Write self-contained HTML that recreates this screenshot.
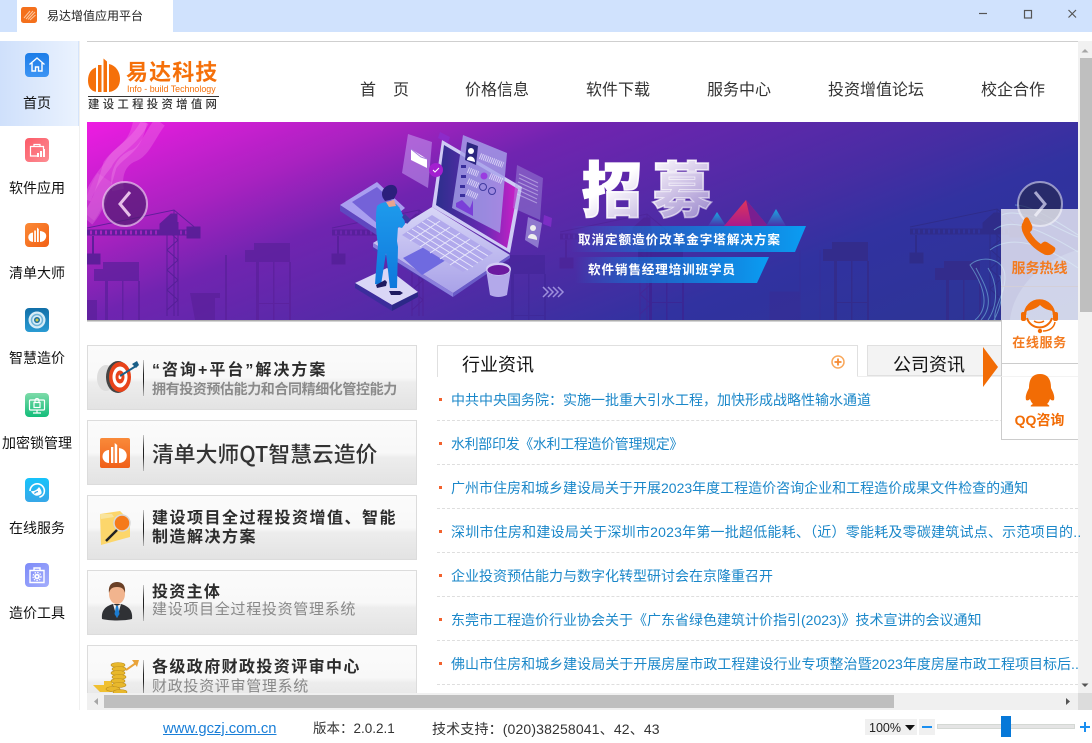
<!DOCTYPE html>
<html lang="zh"><head><meta charset="utf-8"><title>易达增值应用平台</title>
<style>
*{box-sizing:border-box;margin:0;padding:0}
html,body{width:1092px;height:743px;overflow:hidden;background:#fff;font-family:"Liberation Sans","Noto Sans CJK SC",sans-serif;color:#111}
.a{position:absolute;white-space:nowrap}
#stage{position:relative;width:1092px;height:743px;overflow:hidden}
.side{left:0;width:74px;text-align:center;font-size:14px;line-height:20px;color:#111}
.nav{top:80px;font-size:16px;line-height:22px;color:#333}
.card{left:87px;width:330px;height:65px;border:1px solid #dcdcdc;background:linear-gradient(#fbfbfb 0,#f8f8f8 50%,#ededed 58%,#e3e3e3 100%)}
.dv{left:143px;width:1px;height:36px;background:linear-gradient(rgba(0,0,0,.2),#222 40%,#222 60%,rgba(0,0,0,.2))}
.t1{left:152px;font-size:16px;font-weight:bold;color:#2c2c2c;line-height:20px;letter-spacing:1.4px}
.t2{left:152px;font-size:14px;font-weight:bold;color:#8a8a8a;line-height:18px;letter-spacing:-.4px}
.t3{left:152px;font-size:15px;color:#888;line-height:18px;letter-spacing:.7px}
.news{left:451px;font-size:14px;line-height:20px;color:#1a87c9;z-index:2}
.bul{left:439px;width:3px;height:3px;background:#f2622e}
.dash{left:437px;width:641px;height:0;border-top:1px dashed #dedede}
svg{position:absolute;display:block;overflow:visible}
</style></head><body><div id="stage">

<div class="a" style="left:0;top:0;width:1092px;height:32px;background:#d0e2fd"></div>
<div class="a" style="left:17px;top:0;width:156px;height:32px;background:#fff"></div>
<svg style="left:21px;top:7px" width="16" height="16" viewBox="0 0 16 16"><rect width="16" height="16" rx="2.500" fill="#f4701c"/><path d="M5 12L12 4M7 12.500L14 5M9 13L14.500 8M3 11L9 4" stroke="#fbc7a0" stroke-width="1"/></svg>
<div class="a" style="left:47px;top:8px;font-size:12px;line-height:17px;color:#222">易达增值应用平台</div>
<svg style="left:960px;top:0" width="132" height="32" viewBox="0 0 132 32" fill="none" stroke="#555" stroke-width="1.200"><path d="M19 13.500H27"/><rect x="64.500" y="10.500" width="7" height="7.500"/><path d="M108.500 10L116 17.500M116 10L108.500 17.500"/></svg>

<div class="a" style="left:0;top:41px;width:79px;height:85px;background:linear-gradient(90deg,#cfe0fb,#eaf2fe);border-right:1px solid #d5e4fb"></div>
<div class="a" style="left:79px;top:41px;width:1px;height:669px;background:#f0f0f0"></div>

<svg class="a" style="left:25px;top:53px" width="24" height="24" viewBox="0 0 24 24"><defs><linearGradient id="gb" x1="0" y1="0" x2="0" y2="1"><stop offset="0" stop-color="#1c7de8"/><stop offset="1" stop-color="#3c94f4"/></linearGradient></defs><rect width="24" height="24" rx="4" fill="url(#gb)"/><path d="M4.500 11.500L12 5l7.500 6.500M7 10v8h3.500v-4h3v4H17v-8" fill="none" stroke="#fff" stroke-width="1.400"/></svg>
<div class="a side" style="top:93px">首页</div>
<svg class="a" style="left:25px;top:138px" width="24" height="24" viewBox="0 0 24 24"><defs><linearGradient id="gr" x1="0" y1="0" x2="1" y2="1"><stop offset="0" stop-color="#fb5b68"/><stop offset="1" stop-color="#fd8d93"/></linearGradient></defs><rect width="24" height="24" rx="4" fill="url(#gr)"/><path d="M13 18H5.500V8.500h13V11M9 8.500V6.500h6v2" fill="none" stroke="#fff" stroke-width="1.200"/><rect x="12" y="15" width="2" height="4" fill="#fff"/><rect x="15" y="13" width="2" height="6" fill="#fff"/><rect x="18" y="11" width="2" height="8" fill="#fff"/></svg>
<div class="a side" style="top:178px">软件应用</div>
<svg class="a" style="left:25px;top:223px" width="24" height="24" viewBox="0 0 24 24"><defs><linearGradient id="go" x1="0" y1="0" x2="1" y2="1"><stop offset="0" stop-color="#fb8a36"/><stop offset="1" stop-color="#f25f14"/></linearGradient></defs><rect width="24" height="24" rx="4" fill="url(#go)"/><g fill="#fff"><path d="M8 9.500v9.500a4.700 4.700 0 0 1 0-9.500z"/><rect x="9.200" y="7.500" width="1.700" height="11.500"/><path d="M12 4.500l1.800 1.500v13H12z"/><path d="M15 8c4.800 .5 7 3 6 6.500-.6 2.500-3 4.500-6 4.500z"/></g></svg>
<div class="a side" style="top:263px">清单大师</div>
<svg class="a" style="left:25px;top:308px" width="24" height="24" viewBox="0 0 24 24"><defs><linearGradient id="gt" x1="0" y1="0" x2="0" y2="1"><stop offset="0" stop-color="#116fa8"/><stop offset="1" stop-color="#2a9bd3"/></linearGradient></defs><rect width="24" height="24" rx="4" fill="url(#gt)"/><circle cx="12" cy="12" r="8.500" fill="#d6ecf7"/><circle cx="12" cy="12" r="5.500" fill="none" stroke="#6fb4d8" stroke-width="1.500"/><circle cx="12" cy="12" r="3" fill="#1a6f9f"/><circle cx="12" cy="12" r="1.500" fill="#c9c94b"/></svg>
<div class="a side" style="top:348px">智慧造价</div>
<svg class="a" style="left:25px;top:393px" width="24" height="24" viewBox="0 0 24 24"><defs><linearGradient id="gg" x1="0" y1="0" x2="0" y2="1"><stop offset="0" stop-color="#7edba9"/><stop offset="1" stop-color="#13bd7a"/></linearGradient></defs><rect width="24" height="24" rx="4" fill="url(#gg)"/><g fill="none" stroke="#fff" stroke-width="1.200"><rect x="4.500" y="7" width="15" height="10" rx="1"/><path d="M12 17v3M8 20h8"/><rect x="9" y="9.500" width="6" height="5"/><path d="M10 9.500V7.500a2 2 0 0 1 4 0v2"/></g></svg>
<div class="a side" style="top:433px;left:0;width:74px">加密锁管理</div>
<svg class="a" style="left:25px;top:478px" width="24" height="24" viewBox="0 0 24 24"><defs><linearGradient id="gc" x1="0" y1="0" x2="0" y2="1"><stop offset="0" stop-color="#16c3fb"/><stop offset="1" stop-color="#37a7e8"/></linearGradient></defs><rect width="24" height="24" rx="4" fill="url(#gc)"/><path d="M5 13a7.200 7.200 0 0 1 14.400 0c0 3-2 5.500-5 6.200" fill="none" stroke="#fff" stroke-width="1.600"/><path d="M6 13c3 .5 6-1 8-4 2 2.500 3 4.500 2.500 6.500-1.500 2-5 3-7 1.500C8 16 6.500 15 6 13z" fill="#fff"/><path d="M13 13.500c-1.500.3-3 1-3.500 2" stroke="#36a6e8" stroke-width="1.200" fill="none"/></svg>
<div class="a side" style="top:518px">在线服务</div>
<svg class="a" style="left:25px;top:563px" width="24" height="24" viewBox="0 0 24 24"><defs><linearGradient id="gp" x1="0" y1="0" x2="1" y2="1"><stop offset="0" stop-color="#7d8bf8"/><stop offset="1" stop-color="#a3adfc"/></linearGradient></defs><rect width="24" height="24" rx="4" fill="url(#gp)"/><path d="M5 7.500h14v12H5zM9 7.500V5h6v2.500" fill="none" stroke="#fff" stroke-width="1.400"/><circle cx="12" cy="13.500" r="2.800" fill="#fff"/><circle cx="12" cy="13.500" r="4" fill="none" stroke="#fff" stroke-width="1.200" stroke-dasharray="1.500 1.200"/><circle cx="12" cy="13.500" r="1" fill="#8e9afa"/></svg>
<div class="a side" style="top:603px">造价工具</div>

<div class="a" style="left:87px;top:41px;width:991px;height:1px;background:#cfcfcf"></div>

<!-- logo -->
<svg style="left:87px;top:56px" width="34" height="38" viewBox="0 0 34 38" fill="#f5700a"><path d="M9 11.500v24.300C3.800 35 1 30.800 1 24.500 1 17.800 4 13 9 11.500z"/><rect x="11" y="9" width="3.500" height="27"/><path d="M16.500 2.500l3.500 3V36h-3.500z"/><path d="M22 8c7 1.500 11 8 11 15 0 7-3.500 12-11 13z"/></svg>
<div class="a" style="left:126px;top:59px;font-size:22px;line-height:28px;font-weight:bold;color:#f5700a;letter-spacing:1.100px">易达科技</div>
<div class="a" style="left:127px;top:83px;font-size:8.900px;line-height:12px;color:#f5700a">Info - build Technology</div>
<div class="a" style="left:88px;top:96px;width:131px;height:1px;background:#333"></div>
<div class="a" style="left:88px;top:98px;font-size:11.400px;line-height:14px;color:#333;letter-spacing:3.300px;font-weight:500">建设工程投资增值网</div>

<div class="a nav" style="left:360px">首<span style="margin-left:17px">页</span></div>
<div class="a nav" style="left:465px">价格信息</div>
<div class="a nav" style="left:586px">软件下载</div>
<div class="a nav" style="left:707px">服务中心</div>
<div class="a nav" style="left:828px">投资增值论坛</div>
<div class="a nav" style="left:981px">校企合作</div>

<!-- banner -->
<svg style="left:87px;top:122px;overflow:hidden" width="991" height="198" viewBox="87 122 991 198">
<defs>
<linearGradient id="bg" gradientUnits="userSpaceOnUse" x1="87" y1="122" x2="282" y2="625"><stop offset="0" stop-color="#ee1ce2"/><stop offset=".21" stop-color="#a822c0"/><stop offset=".34" stop-color="#7024b0"/><stop offset=".6" stop-color="#472da3"/><stop offset=".72" stop-color="#3132a0"/><stop offset="1" stop-color="#2c3593"/></linearGradient>
<linearGradient id="tx" x1="0" y1="0" x2="1" y2="1"><stop offset=".35" stop-color="#fff"/><stop offset=".9" stop-color="#fff" stop-opacity=".45"/></linearGradient>
<linearGradient id="rb" x1="0" y1="0" x2="1" y2="0"><stop offset="0" stop-color="#0b9cf0" stop-opacity="0"/><stop offset=".4" stop-color="#1279d6" stop-opacity=".7"/><stop offset="1" stop-color="#0a9df2"/></linearGradient>
<linearGradient id="suit" x1="0" y1="0" x2="0" y2="1"><stop offset="0" stop-color="#1e9bec"/><stop offset="1" stop-color="#0f78dc"/></linearGradient>
<linearGradient id="scr" x1="0" y1="0" x2="1" y2="0"><stop offset="0" stop-color="#2c2e8c"/><stop offset=".6" stop-color="#6a2ab4"/><stop offset="1" stop-color="#cf1fc8"/></linearGradient>
<linearGradient id="deck" x1="0" y1="0" x2="0" y2="1"><stop offset="0" stop-color="#d8d6f7"/><stop offset="1" stop-color="#a9a2e8"/></linearGradient>
<linearGradient id="pyr" x1="0" y1="0" x2="0" y2="1"><stop offset="0" stop-color="#e0355a"/><stop offset="1" stop-color="#a81a8c"/></linearGradient>
<linearGradient id="pyb" x1="0" y1="0" x2="0" y2="1"><stop offset="0" stop-color="#1aa8e0"/><stop offset="1" stop-color="#4a30a8"/></linearGradient>
<g id="crane" fill="none" stroke="currentColor">
<path d="M0 22L87 4L111 24M87 4V110" stroke-width="1"/>
<path d="M0 26H113" stroke-width="5" stroke-dasharray="3 2"/>
<path d="M0 24H113M0 29H113" stroke-width="1"/>
<path d="M80 16V110M91 16V110" stroke-width="1"/>
<path d="M80 24L91 34L80 44L91 54L80 64L91 74L80 84L91 94L80 104" stroke-width="1"/>
<path d="M73 28V18L84 8H90V28z" fill="currentColor"/>
<rect x="100" y="21" width="13" height="11" fill="currentColor"/>
<rect x="0" y="48" width="13" height="10" fill="currentColor"/><path d="M6 30V48" stroke-width="2"/>
</g>
<g id="bld" fill="currentColor"><rect x="0" y="7" width="45" height="12"/><rect x="9" y="0" width="36" height="7"/><rect x="11" y="19" width="3" height="68"/><rect x="28" y="19" width="1.500" height="68"/><rect x="44" y="19" width="2" height="68"/><rect x="11" y="60" width="35" height="1"/></g>
</defs>
<rect x="87" y="122" width="991" height="198" fill="url(#bg)"/>
<!-- left wave -->
<g fill="none" stroke="#ffb7f2" stroke-opacity=".22">
<path d="M87 220C100 205 104 185 110 165 120 150 135 150 140 122" stroke-width="14"/>
<path d="M87 200C92 185 100 175 108 165 115 150 133 145 145 122" stroke-width="8"/>
<path d="M118 190C115 175 120 160 135 155 145 150 150 135 160 122" stroke-width="12"/>
<path d="M87 215C95 205 97 190 105 178" stroke-width="18" stroke-opacity=".12"/>
</g>
<!-- cranes -->
<g color="#4f1e92" opacity=".8">
<use href="#crane" x="87" y="206"/>
<use href="#crane" x="332" y="206" opacity=".8"/>
</g>
<g color="#4b2090" opacity=".5"><use href="#crane" x="560" y="210"/></g>
<g color="#2f2c88"><use href="#crane" x="910" y="205" opacity=".9"/></g>
<g color="#5a209a" opacity=".7"><use href="#bld" x="94" y="262"/><use href="#bld" x="245" y="243"/><path d="M190 293h30v5h-5v22h-20zM87 300h10v20H87zM225 255h2v65h-2z" fill="#5a209a"/></g>
<g color="#3d2290" opacity=".65"><use href="#bld" x="638" y="242"/><use href="#bld" x="500" y="255" opacity=".6"/></g>
<g color="#332c8c"><use href="#bld" x="823" y="242"/><use href="#bld" x="935" y="261"/><path d="M800 250v70M820 250v70M770 292h30v28h-30z" stroke="#3a2a90" fill="#3a2a90" opacity=".4"/></g>
<!-- right waves -->
<g fill="none" stroke="#7fc7e6" stroke-width="1" opacity=".55">
<path d="M1015 205c15 0 40 15 63 30M1002 215c10-5 30 0 50 10 12 6 20 10 26 12M994 230c15-12 40-5 84 22M990 250c20-15 50-8 88 18"/>
<path d="M975 320c18-15 5-40 -5-55 10-10 35-8 35 12 0 18-12 30-10 43M981 320c16-18 2-38 -5-52M988 320c12-18 8-40 0-52M994 320c8-15 10-30 6-45"/>
</g>
<path d="M1010 320c3-30 30-60 68-70v70z" fill="#8fb6e0" opacity=".3"/>
<!-- book -->
<path d="M340 205L377 182 405 208 378 230z" fill="#a99ef0"/><path d="M340 205L378 230 378 236 340 211z" fill="#5f47c0"/><path d="M352 202L377 187 400 208 378 224z" fill="#7462d8"/>
<!-- env card -->
<path d="M408 134L432 142 428 188 402 173z" fill="#c29cf0" opacity=".55"/><path d="M411 149L427 159V168L411 160z" fill="#fff"/><path d="M411 149L421 157 427 159" stroke="#a77ce0" fill="none"/>
<!-- laptop -->
<path d="M373 246L510 255 453 297 373 250z" fill="#4a3ab0" opacity=".6"/>
<path d="M432 207L510 255 453 293 373 243z" fill="url(#deck)"/>
<path d="M373 243L453 293V297L373 247z" fill="#8b7fdc"/><path d="M453 293L510 255V258L453 297z" fill="#6a5cc8"/>
<path d="M403 258L426 246 446 260 422 275z" fill="#6f6ae0"/>
<path d="M402 235L432 215 493 253 463 272z" fill="#b1a9ec"/>
<g stroke="#e7e6fb" stroke-width="1"><path d="M407 232L468 270M412 229L473 267M417 226L478 263M422 222L483 260M427 219L488 256"/><path d="M410 241L440 221M420 247L450 227M430 253L460 233M440 259L470 239M450 265L480 245"/></g>
<path d="M442 140L522 187 510 253 432 207z" fill="#cfcbf5"/>
<path d="M444 145L518 189 507 248 436 205z" fill="url(#scr)"/>
<!-- resume card -->
<path d="M463 135L507 153 500 233 452 208z" fill="#a6a1ea" opacity=".8"/>
<path d="M467 142L478 146 476 165 465 160z" fill="#2c2680"/><circle cx="471" cy="151" r="3" fill="#fff"/><path d="M467 160c0-5 8-5 8 2z" fill="#fff"/>
<g stroke="#e7e4fb" stroke-width="6" stroke-dasharray="1 1" opacity=".8"><path d="M480 156L503 165"/><path d="M468 170L478 174"/><path d="M468 181L479 186"/><path d="M467 192L478 197"/><path d="M490 176L502 181"/></g>
<g fill="#3a2f9c"><rect x="461" y="165" width="5" height="3"/><rect x="461" y="175" width="5" height="3"/><rect x="460" y="185" width="5" height="3"/><rect x="460" y="194" width="5" height="3"/></g>
<circle cx="484" cy="176" r="3.500" fill="#9a3ce0"/>
<circle cx="483" cy="187" r="3.500" fill="none" stroke="#403aa0"/><circle cx="492" cy="191" r="3.500" fill="none" stroke="#403aa0"/>
<path d="M456 203L462 200 470 208 473 200V216L456 207z" fill="#7a3fd8"/>
<circle cx="436" cy="170" r="7" fill="#a31fd0"/><path d="M433 170l2 2 4-4" stroke="#fff" fill="none"/>
<!-- docs -->
<path d="M517 165L543 178 540 220 513 208z" fill="#a69ee0" opacity=".4"/>
<g stroke="#ded9f8" opacity=".5"><path d="M519 174L538 183M519 178L538 187M518 182L538 191M518 186L538 195M518 190L537 199M517 194L537 203"/></g>
<path d="M528 217L542 223 538 248 525 240z" fill="#b3aee8" opacity=".6"/><circle cx="533" cy="228" r="3" fill="#eee"/><path d="M528 238c0-6 10-5 9 2z" fill="#eee"/>
<path d="M544 215l8 3-1 9-8-3zM440 132l10 5-2 6-10-5z" fill="#8a2fd0" opacity=".7"/>
<!-- cup -->
<path d="M486 269L511 269 507 295Q498 299 490 295z" fill="#b3a9ea"/><ellipse cx="498.500" cy="269" rx="12.500" ry="6.500" fill="#d2cdf5"/><ellipse cx="498.500" cy="270" rx="11" ry="5" fill="#6b1aa0"/>
<g fill="none" stroke="#9d8fdc" stroke-width="1.500"><path d="M543 287l5 5-5 5M548 287l5 5-5 5M553 287l5 5-5 5M558 287l5 5-5 5"/></g>
<!-- man -->
<path d="M355 283L387 268 418 292 392 305z" fill="#d9d6f6"/><path d="M355 283L392 305V311L355 288z" fill="#3b2d9c"/><path d="M392 305L418 292V297L392 311z" fill="#2c2888"/>
<path d="M377 206c5-5 15-5 19-2 4 3 9 14 9 20l-3 4-4-1-1 14 1 6-1 41-7 0-4-35-5 32-6-1 3-40c-2-10-3-28-1-38z" fill="url(#suit)"/>
<path d="M386 202l8-2 2 6-7 1z" fill="#e8a38f"/><path d="M383 198c-3-6 1-12 7-13 5-1 8 3 7 8l-3 6-9 2z" fill="#2c1f7c"/>
<path d="M376 285l9-5 2 2-1 4-9 2zM389 291h11l3 2-3 2h-9z" fill="#1e1a60"/>
<path d="M405 214l6 6 -4 4-5-7z" fill="#3d39a0"/>
<!-- arrows -->
<circle cx="125" cy="204" r="22" fill="#4f1c72" fill-opacity=".72" stroke="#f0d5f3" stroke-opacity=".65" stroke-width="2"/><path d="M130 192L120 204 130 216" fill="none" stroke="#e6bfe8" stroke-width="3"/>
<circle cx="1040" cy="204" r="22" fill="#262a5a" fill-opacity=".75" stroke="#cfcfea" stroke-opacity=".65" stroke-width="2"/><path d="M1035 192L1045 204 1035 216" fill="none" stroke="#a9a9cf" stroke-width="3"/>
<!-- title -->
<text x="582" y="212" font-family="Noto Sans CJK SC" font-weight="900" font-size="60" fill="url(#tx)" stroke="url(#tx)" stroke-width="1.600" textLength="130">招募</text>
<!-- pyramid -->
<path d="M708 226L717 212 726 226z" fill="url(#pyb)"/>
<path d="M724 226L746 200 768 226z" fill="url(#pyr)"/><path d="M746 200L768 226H752z" fill="#7a1e90"/>
<path d="M766 226L776 209 786 226z" fill="url(#pyb)"/>
<path d="M570 226H806L795 252H570z" fill="url(#rb)"/>
<path d="M575 257H769L757 283H575z" fill="url(#rb)"/>
<text x="578" y="244" font-family="Noto Sans CJK SC" font-size="12.600" font-weight="bold" fill="#fff" textLength="202">取消定额造价改革金字塔解决方案</text>
<text x="588" y="274" font-family="Noto Sans CJK SC" font-size="12.600" font-weight="bold" fill="#fff" textLength="147">软件销售经理培训班学员</text>
</svg>
<div class="a" style="left:87px;top:320px;width:991px;height:2px;background:linear-gradient(#9a9a9a,#e8e8e8)"></div>

<!-- cards -->
<div class="a card" style="top:345px"></div>
<svg style="left:94px;top:358px" width="46" height="38" viewBox="0 0 46 38"><ellipse cx="12" cy="20" rx="9" ry="13" fill="#ddd"/><ellipse cx="24" cy="19" rx="12" ry="16" fill="#444"/><ellipse cx="26" cy="19" rx="11" ry="15" fill="#e8431a"/><ellipse cx="26" cy="19" rx="7.500" ry="10.500" fill="#fff"/><ellipse cx="26" cy="19" rx="4.500" ry="6.500" fill="#e8431a"/><ellipse cx="26" cy="19" rx="1.500" ry="2.200" fill="#fff"/><path d="M26 18L42 8" stroke="#1a5f88" stroke-width="2"/><path d="M38 6L43 3 45 7 42 10z" fill="#1a5f88"/></svg>
<div class="a dv" style="top:360px"></div>
<div class="a t1" style="top:361px;letter-spacing:2px">“咨询+平台”解决方案</div>
<div class="a t2" style="top:380px">拥有投资预估能力和合同精细化管控能力</div>

<div class="a card" style="top:420px"></div>
<svg style="left:100px;top:438px" width="30" height="30" viewBox="0 0 30 30"><defs><linearGradient id="go2" x1="0" y1="0" x2="0" y2="1"><stop offset="0" stop-color="#f98a3a"/><stop offset="1" stop-color="#f0601a"/></linearGradient></defs><rect width="30" height="30" rx="2" fill="url(#go2)"/><g fill="#fff"><path d="M9 12v13a6.500 6.500 0 0 1 0-13z"/><rect x="11" y="9" width="2.300" height="16"/><path d="M14.700 5l2.500 2v18h-2.500z"/><path d="M19 10c6 1 8.500 5 7.500 9.500-1 3.500-4 5.500-7.500 5.500z"/></g></svg>
<div class="a dv" style="top:435px"></div>
<div class="a" style="left:152px;top:438px;font-family:'Noto Sans CJK SC',sans-serif;font-size:21.800px;line-height:32px;color:#333;font-weight:500">清单大师QT智慧云造价</div>

<div class="a card" style="top:495px"></div>
<svg style="left:98px;top:509px" width="36" height="37" viewBox="0 0 36 37"><path d="M2 5L22 2 32 12 32 28 3 36z" fill="#fcd66b"/><path d="M2 5H14L16 8 3 10z" fill="#f9e49c"/><circle cx="24" cy="14" r="8" fill="#f57a1a" stroke="#d8d8d8" stroke-width="1.500"/><path d="M19 21L8 32" stroke="#222" stroke-width="2.500"/></svg>
<div class="a dv" style="top:510px"></div>
<div class="a t1" style="top:509px;letter-spacing:1.500px">建设项目全过程投资增值、智能</div>
<div class="a t1" style="top:528px;letter-spacing:1.500px">制造解决方案</div>

<div class="a card" style="top:570px"></div>
<svg style="left:100px;top:581px" width="34" height="40" viewBox="0 0 34 40"><path d="M2 38c-1-9 4-13 11-15h8c7 2 12 6 11 15-8 2-22 2-30 0z" fill="#2f3135"/><path d="M13 23l4 14 4-14-4 2z" fill="#eee"/><path d="M16 25h2l1.500 8-2.500 4-2.500-4z" fill="#1c7cd0"/><ellipse cx="17" cy="13" rx="8" ry="10" fill="#f1b48e"/><path d="M9 12C8 3 13 1 17 1s9 2 8 11c-1-4-3-6-8-6s-7 2-8 6z" fill="#6a4026"/></svg>
<div class="a dv" style="top:585px"></div>
<div class="a t1" style="top:583px;letter-spacing:1.300px">投资主体</div>
<div class="a t3" style="top:601px">建设项目全过程投资管理系统</div>

<div class="a card" style="top:645px;height:65px"></div>
<svg style="left:92px;top:658px" width="48" height="38" viewBox="0 0 48 38"><path d="M1 27H12V23H20V34H8z" fill="#f0c030"/><g fill="#e8b82c" stroke="#b98a1a" stroke-width=".6"><ellipse cx="26" cy="7" rx="7" ry="2.500"/><ellipse cx="27" cy="11" rx="7" ry="2.500"/><ellipse cx="26" cy="15" rx="7" ry="2.500"/><ellipse cx="27" cy="19" rx="7" ry="2.500"/><ellipse cx="26" cy="23" rx="7" ry="2.500"/><ellipse cx="27" cy="27" rx="7" ry="2.500"/><ellipse cx="21" cy="31" rx="7" ry="2.500"/><ellipse cx="28" cy="34" rx="7" ry="2.500"/></g><path d="M34 12L44 5" stroke="#e9a33a" stroke-width="2"/><path d="M40 2H47L45 9z" fill="#e9a33a"/></svg>
<div class="a dv" style="top:660px"></div>
<div class="a t1" style="top:658px;letter-spacing:1.400px">各级政府财政投资评审中心</div>
<div class="a t3" style="top:678px">财政投资评审管理系统</div>

<!-- tabs -->
<div class="a" style="left:437px;top:345px;width:421px;height:32px;border:1px solid #e0e0e0;border-bottom:0;background:#fff"></div>
<div class="a" style="left:462px;top:352px;font-size:18px;line-height:27px;color:#111">行业资讯</div>
<svg style="left:831px;top:355px" width="14" height="14" viewBox="0 0 14 14"><circle cx="7" cy="7" r="6" fill="#fff" stroke="#f9a85c" stroke-width="1.500"/><path d="M7 3.500v7M3.500 7h7" stroke="#f58a33" stroke-width="1.800"/></svg>
<div class="a" style="left:867px;top:345px;width:211px;height:31px;border:1px solid #e0e0e0;background:#f3f3f3"></div>
<div class="a" style="left:857px;top:376px;width:221px;height:1px;background:#eee"></div>
<div class="a" style="left:893px;top:352px;font-size:18px;line-height:27px;color:#111">公司资讯</div>
<svg style="left:983px;top:347px" width="16" height="40" viewBox="0 0 16 40"><path d="M0 0L15 20 0 40z" fill="#f26c05"/></svg>

<!-- scrollbars -->
<div class="a" style="left:1078px;top:41px;width:14px;height:652px;background:#f1f1f1"></div>
<div class="a" style="left:1080px;top:58px;width:12px;height:254px;background:#bfbfbf"></div>
<svg style="left:1078px;top:41px" width="14" height="652"><path d="M3.500 11.500L7 8l3.500 3.500z" fill="#a6a6a6"/><path d="M3.500 642.500h7L7 646z" fill="#555"/></svg>
<div class="a" style="left:87px;top:693px;width:991px;height:17px;background:#f0f0f0"></div>
<div class="a" style="left:104px;top:695px;width:790px;height:13px;background:#bfbfbf"></div>
<div class="a" style="left:1078px;top:693px;width:14px;height:17px;background:#dcdcdc"></div>
<svg style="left:87px;top:693px" width="991" height="17"><path d="M11 5v7L7 8.500z" fill="#a6a6a6"/><path d="M979 5v7l4-3.500z" fill="#555"/></svg>

<!-- news -->
<div class="a bul" style="top:398px"></div><div class="a news" style="top:390px">中共中央国务院：实施一批重大引水工程，加快形成战略性输水通道</div><div class="a dash" style="top:420px"></div>
<div class="a bul" style="top:442px"></div><div class="a news" style="top:434px;letter-spacing:-.35px">水利部印发《水利工程造价管理规定》</div><div class="a dash" style="top:464px"></div>
<div class="a bul" style="top:486px"></div><div class="a news" style="top:478px">广州市住房和城乡建设局关于开展2023年度工程造价咨询企业和工程造价成果文件检查的通知</div><div class="a dash" style="top:508px"></div>
<div class="a bul" style="top:530px"></div><div class="a news" style="top:522px;letter-spacing:.22px">深圳市住房和建设局关于深圳市2023年第一批超低能耗、（近）零能耗及零碳建筑试点、示范项目的..</div><div class="a dash" style="top:552px"></div>
<div class="a bul" style="top:574px"></div><div class="a news" style="top:566px">企业投资预估能力与数字化转型研讨会在京隆重召开</div><div class="a dash" style="top:596px"></div>
<div class="a bul" style="top:618px"></div><div class="a news" style="top:610px">东莞市工程造价行业协会关于《广东省绿色建筑计价指引(2023)》技术宣讲的会议通知</div><div class="a dash" style="top:640px"></div>
<div class="a bul" style="top:662px"></div><div class="a news" style="top:654px;letter-spacing:.02px">佛山市住房和城乡建设局关于开展房屋市政工程建设行业专项整治暨2023年度房屋市政工程项目标后..</div><div class="a dash" style="top:684px"></div>

<!-- floating panel -->
<div class="a" style="left:1001px;top:209px;width:77px;height:111px;background:rgba(255,255,255,.74);z-index:3"></div>
<div class="a" style="left:1001px;top:320px;width:77px;height:120px;background:#fff;border-left:1px solid #ccc;border-bottom:1px solid #ccc;z-index:3"></div>
<div class="a" style="left:1001px;top:286px;width:77px;height:1px;background:#d3cfd8;z-index:3"></div>
<div class="a" style="left:1001px;top:363px;width:77px;height:1px;background:#ccc;z-index:3"></div>
<div class="a" style="left:1001px;top:376px;width:77px;height:1px;background:#eee;opacity:.7;z-index:3"></div>
<svg style="left:1001px;top:209px;z-index:4" width="77" height="231" viewBox="0 0 77 231">
<path d="M23 13c-2 3-2 5-1 9 4 10 12 18 22 23 4 1 7 0 9-3 1-2 1-3-1-4l-6-4c-2-1-3-1-5 1l-1 1c-5-3-9-8-12-13l2-2c1-2 1-3 0-5l-3-6c-1-2-3-1-4 3z" fill="#f26c05" stroke="#f26c05" stroke-width="1.500"/>
<g transform="translate(0 -13)">
<path d="M24 119a14.500 14.500 0 0 1 29 0" fill="none" stroke="#f26c05" stroke-width="2.500"/>
<path d="M25 115a14 14 0 0 1 27 0c-7-1-11-4-13-6-3 3-8 5-14 6z" fill="#f26c05"/>
<path d="M26 122a13 13 0 0 0 25 0" fill="none" stroke="#f26c05" stroke-width="2"/>
<rect x="20" y="116" width="5" height="9" rx="2" fill="#f26c05"/><rect x="52" y="116" width="5" height="9" rx="2" fill="#f26c05"/>
<path d="M33 125c3 2 7 2 10 0" stroke="#f26c05" fill="none" stroke-width="1.500"/>
<path d="M54 126c-1 6-6 9-12 9" stroke="#f26c05" fill="none" stroke-width="1.500"/><circle cx="39" cy="135" r="2.200" fill="#f26c05"/>
</g>
<g transform="translate(0 3)"><path d="M39 162c-9 0-11 7-11 14-2 4-4 8-3 12 2 1 3 0 4-1 1 3 2 4 3 5-2 1-3 2-2 2.500h9h9c1-.5 0-1.500-2-2.500 1-1 2-2 3-5 1 1 2 2 4 1 1-4-1-8-3-12 0-7-2-14-11-14z" fill="#f26c05"/></g>
</svg>
<div class="a" style="left:1001px;top:259px;width:77px;text-align:center;font-size:14px;line-height:18px;color:#f37b20;font-weight:bold;z-index:4">服务热线</div>
<div class="a" style="left:1001px;top:334px;width:77px;text-align:center;font-size:13px;line-height:18px;color:#f37b20;font-weight:bold;letter-spacing:.6px;z-index:4">在线服务</div>
<div class="a" style="left:1001px;top:411px;width:77px;text-align:center;font-size:14px;line-height:18px;color:#f26c05;font-weight:bold;z-index:4">QQ咨询</div>

<!-- status -->
<div class="a" style="left:163px;top:719px;font-size:14.800px;line-height:20px;color:#1a7fd8;text-decoration:underline">www.gczj.com.cn</div>
<div class="a" style="left:313px;top:719px;font-size:13.500px;line-height:20px;color:#333">版本：2.0.2.1</div>
<div class="a" style="left:432px;top:719px;font-size:14px;line-height:20px;color:#333;letter-spacing:.15px">技术支持：(020)38258041、42、43</div>
<div class="a" style="left:865px;top:719px;width:52px;height:16px;background:#f0f0f0"></div>
<div class="a" style="left:869px;top:720px;font-size:12.500px;line-height:17px;color:#222">100%</div>
<svg style="left:905px;top:725px" width="10" height="6"><path d="M0 0H10L5 5.500z" fill="#111"/></svg>
<div class="a" style="left:919px;top:719px;width:16px;height:16px;background:#f0f0f0"></div>
<div class="a" style="left:922px;top:726px;width:10px;height:2px;background:#1b8ff0"></div>
<div class="a" style="left:937px;top:724px;width:138px;height:5px;background:#e4e4e4;border:1px solid #d4d8d4"></div>
<div class="a" style="left:1001px;top:716px;width:10px;height:21px;background:#0678d8"></div>
<div class="a" style="left:1080px;top:726px;width:10px;height:2px;background:#1b8ff0"></div>
<div class="a" style="left:1084px;top:722px;width:2px;height:10px;background:#1b8ff0"></div>
</div></body></html>
